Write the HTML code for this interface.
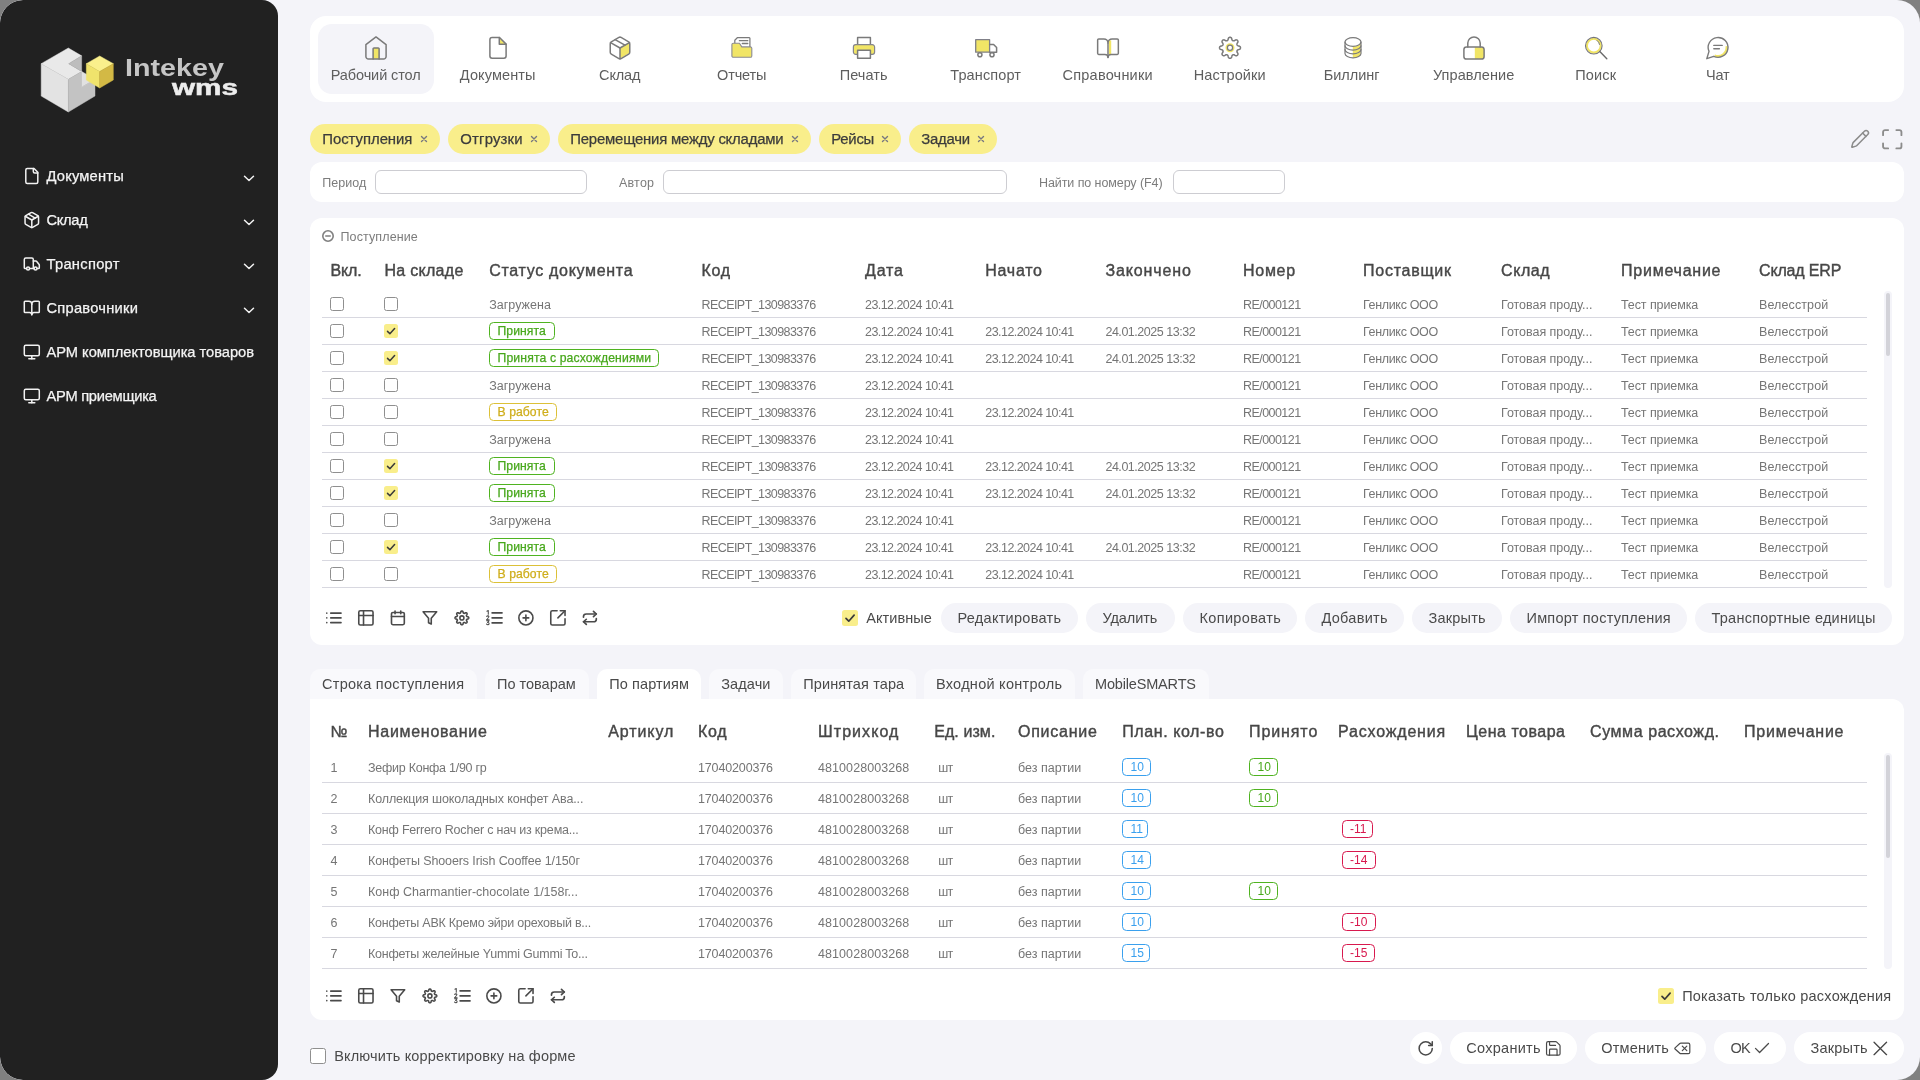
<!DOCTYPE html>
<html lang="ru"><head><meta charset="utf-8"><title>Intekey WMS</title>
<style>
html,body{margin:0;padding:0}
body{width:1920px;height:1080px;overflow:hidden;background:#808080;font-family:"Liberation Sans",sans-serif;position:relative}
.app{will-change:transform;position:absolute;left:0;top:0;width:1920px;height:1080px;background:#f4f4f9;border-radius:23px;overflow:hidden}
.side{position:absolute;left:0;top:0;width:278px;height:1080px;background:#212121;border-radius:23px 16px 16px 23px}
.t{position:absolute;white-space:nowrap;display:block}
.b{position:absolute;box-sizing:border-box}
.ic{position:absolute;display:block;overflow:visible}
.bd{border-radius:4.5px;background:#fff}
.m{-webkit-text-stroke:0.4px currentColor}
.m2{-webkit-text-stroke:0.25px currentColor}
.hl{position:absolute;height:1px;background:#d8d8e0}
</style></head><body><div class="app">

<div class="side">
<svg class="ic" style="left:36px;top:44px" width="84" height="72" viewBox="0 0 1260 1080">
<polygon points="78,295 485,60 685,178 490,295 685,412 485,530" fill="#e9e9e9" stroke="#e9e9e9" stroke-width="7" stroke-linejoin="round"/>
<polygon points="78,295 485,530 485,1020 78,780" fill="#e3e3e3" stroke="#e3e3e3" stroke-width="7" stroke-linejoin="round"/>
<polygon points="490,295 685,178 685,412" fill="#bdbdbd" stroke="#bdbdbd" stroke-width="7" stroke-linejoin="round"/>
<polygon points="485,530 685,412 685,645 885,530 885,780 485,1020" fill="#c3c3c3" stroke="#c3c3c3" stroke-width="7" stroke-linejoin="round"/>
<polygon points="685,412 885,530 685,645" fill="#e1e1e1" stroke="#e1e1e1" stroke-width="7" stroke-linejoin="round"/>
<polygon points="755,295 955,180 1160,295 955,412" fill="#faf08c" stroke="#faf08c" stroke-width="7" stroke-linejoin="round"/>
<polygon points="755,295 955,412 955,660 755,540" fill="#f0e36c" stroke="#f0e36c" stroke-width="7" stroke-linejoin="round"/>
<polygon points="955,412 1160,295 1160,540 955,660" fill="#d3b945" stroke="#d3b945" stroke-width="7" stroke-linejoin="round"/>
</svg>
<span class="t" id="lg1" style="left:125.3px;top:53.8px;font-size:24px;line-height:28px;font-weight:700;color:#c6c6c6;transform-origin:0 0;transform:scaleX(1.195)">Intekey</span>
<span class="t" id="lg2" style="left:171.5px;top:74.3px;font-size:22px;line-height:28px;font-weight:700;color:#ededed;-webkit-text-stroke:0.5px #ededed;transform-origin:0 0;transform:scaleX(1.35)">wms</span>
<svg class="ic" style="left:17px;top:162px" width="28" height="28" viewBox="0 0 28 28" fill="none" stroke="#f2f2f2" stroke-linecap="round" stroke-linejoin="round"><g transform="translate(14.80 14.00) scale(0.7500 0.7500) translate(-12 -12)" stroke-width="2.00"><path d="M15 2H6a2 2 0 0 0-2 2v16a2 2 0 0 0 2 2h12a2 2 0 0 0 2-2V7Z"/><path d="M14 2v4a2 2 0 0 0 2 2h4"/></g></svg>
<span class="t m2 sb" style="left:46.5px;top:167.00px;font-size:14.7px;line-height:19px;color:#f4f4f4;letter-spacing:0.185px;">Документы</span>
<svg class="ic" style="left:243px;top:173.5px" width="12" height="9" viewBox="0 0 12 9" fill="none" stroke="#f2f2f2" stroke-width="1.5" stroke-linecap="round" stroke-linejoin="round"><path d="M1.5 2.2 6 6.5 10.500 2.2"/></svg>
<svg class="ic" style="left:17px;top:206px" width="28" height="28" viewBox="0 0 28 28" fill="none" stroke="#f2f2f2" stroke-linecap="round" stroke-linejoin="round"><g transform="translate(14.80 14.00) scale(0.7500 0.7500) translate(-12 -12)" stroke-width="2.00"><path d="m7.5 4.27 9 5.15"/><path d="M21 8a2 2 0 0 0-1-1.73l-7-4a2 2 0 0 0-2 0l-7 4A2 2 0 0 0 3 8v8a2 2 0 0 0 1 1.73l7 4a2 2 0 0 0 2 0l7-4A2 2 0 0 0 21 16Z"/><path d="m3.3 7 8.7 5 8.7-5"/><path d="M12 22V12"/></g></svg>
<span class="t m2 sb" style="left:46.5px;top:211.00px;font-size:14.7px;line-height:19px;color:#f4f4f4;letter-spacing:-0.304px;">Склад</span>
<svg class="ic" style="left:243px;top:217.5px" width="12" height="9" viewBox="0 0 12 9" fill="none" stroke="#f2f2f2" stroke-width="1.5" stroke-linecap="round" stroke-linejoin="round"><path d="M1.5 2.2 6 6.5 10.500 2.2"/></svg>
<svg class="ic" style="left:17px;top:250px" width="28" height="28" viewBox="0 0 28 28" fill="none" stroke="#f2f2f2" stroke-linecap="round" stroke-linejoin="round"><g transform="translate(14.80 14.00) scale(0.7500 0.7500) translate(-12 -12)" stroke-width="2.00"><path d="M14 18V6a2 2 0 0 0-2-2H4a2 2 0 0 0-2 2v11a1 1 0 0 0 1 1h2"/><path d="M15 18H9"/><path d="M19 18h2a1 1 0 0 0 1-1v-3.65a1 1 0 0 0-.22-.624l-3.48-4.35A1 1 0 0 0 17.52 8H14"/><circle cx="17" cy="18" r="2"/><circle cx="7" cy="18" r="2"/></g></svg>
<span class="t m2 sb" style="left:46.5px;top:255.00px;font-size:14.7px;line-height:19px;color:#f4f4f4;letter-spacing:0.295px;">Транспорт</span>
<svg class="ic" style="left:243px;top:261.5px" width="12" height="9" viewBox="0 0 12 9" fill="none" stroke="#f2f2f2" stroke-width="1.5" stroke-linecap="round" stroke-linejoin="round"><path d="M1.5 2.2 6 6.5 10.500 2.2"/></svg>
<svg class="ic" style="left:17px;top:294px" width="28" height="28" viewBox="0 0 28 28" fill="none" stroke="#f2f2f2" stroke-linecap="round" stroke-linejoin="round"><g transform="translate(14.80 14.00) scale(0.7500 0.7500) translate(-12 -12)" stroke-width="2.00"><path d="M12 7v14"/><path d="M3 18a1 1 0 0 1-1-1V4a1 1 0 0 1 1-1h5a4 4 0 0 1 4 4 4 4 0 0 1 4-4h5a1 1 0 0 1 1 1v13a1 1 0 0 1-1 1h-6a3 3 0 0 0-3 3 3 3 0 0 0-3-3z"/></g></svg>
<span class="t m2 sb" style="left:46.5px;top:299.00px;font-size:14.7px;line-height:19px;color:#f4f4f4;letter-spacing:0.242px;">Справочники</span>
<svg class="ic" style="left:243px;top:305.5px" width="12" height="9" viewBox="0 0 12 9" fill="none" stroke="#f2f2f2" stroke-width="1.5" stroke-linecap="round" stroke-linejoin="round"><path d="M1.5 2.2 6 6.5 10.500 2.2"/></svg>
<svg class="ic" style="left:17px;top:338px" width="28" height="28" viewBox="0 0 28 28" fill="none" stroke="#f2f2f2" stroke-linecap="round" stroke-linejoin="round"><g transform="translate(14.80 14.00) scale(0.7500 0.7500) translate(-12 -12)" stroke-width="2.00"><rect width="20" height="14" x="2" y="3" rx="2"/><path d="M8 21h8"/><path d="M12 17v4"/></g></svg>
<span class="t m2 sb" style="left:46.5px;top:343.00px;font-size:14.7px;line-height:19px;color:#f4f4f4;letter-spacing:-0.036px;">АРМ комплектовщика товаров</span>
<svg class="ic" style="left:17px;top:382px" width="28" height="28" viewBox="0 0 28 28" fill="none" stroke="#f2f2f2" stroke-linecap="round" stroke-linejoin="round"><g transform="translate(14.80 14.00) scale(0.7500 0.7500) translate(-12 -12)" stroke-width="2.00"><rect width="20" height="14" x="2" y="3" rx="2"/><path d="M8 21h8"/><path d="M12 17v4"/></g></svg>
<span class="t m2 sb" style="left:46.5px;top:387.00px;font-size:14.7px;line-height:19px;color:#f4f4f4;letter-spacing:-0.271px;">АРМ приемщика</span>
</div>
<div class="b" style="left:310px;top:16px;width:1594px;height:86px;background:#fff;border-radius:16px;"></div>
<div class="b" style="left:318px;top:24px;width:116px;height:70px;background:#f4f4f9;border-radius:14px;"></div>
<span class="t nv" style="left:225.7px;width:300px;text-align:center;top:66.00px;font-size:14.5px;line-height:19px;color:#5e5e5e;letter-spacing:-0.094px;">Рабочий стол</span>
<span class="t nv" style="left:347.7px;width:300px;text-align:center;top:66.00px;font-size:14.5px;line-height:19px;color:#5e5e5e;letter-spacing:0.106px;">Документы</span>
<span class="t nv" style="left:469.70000000000005px;width:300px;text-align:center;top:66.00px;font-size:14.5px;line-height:19px;color:#5e5e5e;letter-spacing:-0.142px;">Склад</span>
<span class="t nv" style="left:591.7px;width:300px;text-align:center;top:66.00px;font-size:14.5px;line-height:19px;color:#5e5e5e;letter-spacing:-0.145px;">Отчеты</span>
<span class="t nv" style="left:713.7px;width:300px;text-align:center;top:66.00px;font-size:14.5px;line-height:19px;color:#5e5e5e;letter-spacing:0.077px;">Печать</span>
<span class="t nv" style="left:835.7px;width:300px;text-align:center;top:66.00px;font-size:14.5px;line-height:19px;color:#5e5e5e;letter-spacing:0.133px;">Транспорт</span>
<span class="t nv" style="left:957.7px;width:300px;text-align:center;top:66.00px;font-size:14.5px;line-height:19px;color:#5e5e5e;letter-spacing:0.216px;">Справочники</span>
<span class="t nv" style="left:1079.7px;width:300px;text-align:center;top:66.00px;font-size:14.5px;line-height:19px;color:#5e5e5e;letter-spacing:0.099px;">Настройки</span>
<span class="t nv" style="left:1201.7px;width:300px;text-align:center;top:66.00px;font-size:14.5px;line-height:19px;color:#5e5e5e;letter-spacing:-0.023px;">Биллинг</span>
<span class="t nv" style="left:1323.7px;width:300px;text-align:center;top:66.00px;font-size:14.5px;line-height:19px;color:#5e5e5e;letter-spacing:0.077px;">Управление</span>
<span class="t nv" style="left:1445.7px;width:300px;text-align:center;top:66.00px;font-size:14.5px;line-height:19px;color:#5e5e5e;letter-spacing:0.178px;">Поиск</span>
<span class="t nv" style="left:1567.7px;width:300px;text-align:center;top:66.00px;font-size:14.5px;line-height:19px;color:#5e5e5e;letter-spacing:-0.231px;">Чат</span>
<svg class="ic" style="left:360.0px;top:32.0px" width="32" height="32" viewBox="-16.0 -16.0 32 32" fill="none" stroke="#7a7a7a" stroke-width="1.5" stroke-linecap="round" stroke-linejoin="round"><rect x="-2.9" y="-0.1" width="6" height="11" fill="#f1e566" stroke="none"/><path d="M-2.9 10.9V0.800a.9.9 0 0 1 .9-.9h4.200a.9.9 0 0 1 .9.9v10.100"/><path d="M-10.1 -3.4 0 -11.1 10.1 -3.4V8.4a2.5 2.5 0 0 1-2.5 2.5H-7.6a2.5 2.5 0 0 1-2.5-2.5z"/></svg>
<svg class="ic" style="left:482.0px;top:32.0px" width="32" height="32" viewBox="-16.0 -16.0 32 32" fill="none" stroke="#7a7a7a" stroke-width="1.5" stroke-linecap="round" stroke-linejoin="round"><path d="M1.6 -9.8 7.4 -4 1.6 -4z" fill="#f1e566" stroke="none"/><path d="M1.5 -10.5H-5.9a2.2 2.2 0 0 0-2.2 2.2V8.1a2.2 2.2 0 0 0 2.2 2.2H5.9a2.2 2.2 0 0 0 2.2-2.2V-3.9z"/><path d="M1.3 -10.5v6.8h6.8"/></svg>
<svg class="ic" style="left:604.0px;top:32.0px" width="32" height="32" viewBox="-16.0 -16.0 32 32" fill="none" stroke="#7a7a7a" stroke-width="1.5" stroke-linecap="round" stroke-linejoin="round"><g transform="scale(1.085) translate(-12 -12)" stroke-width="1.38"><path d="M12 12 20.6 7.1 20.6 16.6 12 21.6z" fill="#f1e566" stroke="none"/><path d="m7.5 4.27 9 5.15"/><path d="M21 8a2 2 0 0 0-1-1.73l-7-4a2 2 0 0 0-2 0l-7 4A2 2 0 0 0 3 8v8a2 2 0 0 0 1 1.73l7 4a2 2 0 0 0 2 0l7-4A2 2 0 0 0 21 16Z"/><path d="m3.3 7 8.7 5 8.7-5"/><path d="M12 22V12"/></g></svg>
<svg class="ic" style="left:726.0px;top:32.0px" width="32" height="32" viewBox="-16.0 -16.0 32 32" fill="none" stroke="#7a7a7a" stroke-width="1.5" stroke-linecap="round" stroke-linejoin="round"><path d="M-7.2 -5V-7.800l2.500-2.500H7.300a.6.6 0 0 1 .6.6V0" stroke-width="1.25"/><path d="M-2.6 -7.3H5.8M0.3 -4.5H5.8" stroke-width="1.3"/><path d="M-10.1 -3.4a1.4 1.4 0 0 1 1.4-1.4h6.2l2.3 3.7h8.6a1.4 1.4 0 0 1 1.4 1.4v7.6a1.4 1.4 0 0 1-1.4 1.4H-8.7a1.4 1.4 0 0 1-1.4-1.4z" fill="#f1e566" stroke="#8b8b93" stroke-width="1.1"/></svg>
<svg class="ic" style="left:848.0px;top:32.0px" width="32" height="32" viewBox="-16.0 -16.0 32 32" fill="none" stroke="#7a7a7a" stroke-width="1.5" stroke-linecap="round" stroke-linejoin="round"><path d="M-6.4 -3.3v-7.3H6.4v7.3"/><path d="M-8.3 -3.3H8.3a2.3 2.3 0 0 1 2.3 2.3v5a2.3 2.3 0 0 1-2.3 2.3H-8.3a2.300 2.300 0 0 1-2.300-2.300v-5a2.300 2.300 0 0 1 2.300-2.300z" fill="#f1e566" stroke="#85858c" stroke-width="1.2"/><rect x="-6.4" y="2.2" width="12.8" height="8.100" fill="#fff"/></svg>
<svg class="ic" style="left:970.0px;top:32.0px" width="32" height="32" viewBox="-16.0 -16.0 32 32" fill="none" stroke="#7a7a7a" stroke-width="1.5" stroke-linecap="round" stroke-linejoin="round"><rect x="-10.3" y="-8.3" width="13.9" height="12.5" fill="#f1e566" stroke="#808088" stroke-width="1.3"/><path d="M3.6 -3.6H7.6l3 3.200V4.2H3.600"/><circle cx="-6.100" cy="6.800" r="2.050" fill="#fff"/><circle cx="6" cy="6.800" r="2.050" fill="#fff"/></svg>
<svg class="ic" style="left:1092.0px;top:32.0px" width="32" height="32" viewBox="-16.0 -16.0 32 32" fill="none" stroke="#7a7a7a" stroke-width="1.5" stroke-linecap="round" stroke-linejoin="round"><rect x="0.9" y="-7.6" width="2.3" height="14.4" fill="#f1e566" stroke="none"/><g transform="translate(0 0.2) scale(1.035 1.03) translate(-12 -12)" stroke-width="1.45"><path d="M12 7v14"/><path d="M3 18a1 1 0 0 1-1-1V4a1 1 0 0 1 1-1h5a4 4 0 0 1 4 4 4 4 0 0 1 4-4h5a1 1 0 0 1 1 1v13a1 1 0 0 1-1 1h-6a3 3 0 0 0-3 3 3 3 0 0 0-3-3z"/></g></svg>
<svg class="ic" style="left:1214.0px;top:32.0px" width="32" height="32" viewBox="-16.0 -16.0 32 32" fill="none" stroke="#7a7a7a" stroke-width="1.5" stroke-linecap="round" stroke-linejoin="round"><circle cx="0" cy="-0.2" r="3.7" stroke="#f1e566" stroke-width="1.6"/><g transform="translate(0 -0.2) scale(1.03) translate(-12 -12)" stroke-width="1.45"><path d="M12.00 1.80 L12.33 1.83 L12.66 1.93 L12.98 2.09 L13.27 2.33 L13.54 2.66 L13.72 3.37 L13.85 4.08 L14.03 4.42 L14.22 4.69 L14.41 4.89 L14.62 5.05 L14.83 5.16 L15.06 5.24 L15.32 5.27 L15.60 5.26 L15.92 5.21 L16.30 5.09 L16.89 4.68 L17.51 4.31 L17.94 4.26 L18.32 4.30 L18.66 4.41 L18.95 4.57 L19.21 4.79 L19.43 5.05 L19.59 5.34 L19.70 5.68 L19.74 6.06 L19.69 6.49 L19.32 7.11 L18.91 7.70 L18.79 8.08 L18.74 8.40 L18.73 8.68 L18.76 8.94 L18.84 9.17 L18.95 9.38 L19.11 9.59 L19.31 9.78 L19.58 9.97 L19.92 10.15 L20.63 10.28 L21.34 10.46 L21.67 10.73 L21.91 11.02 L22.07 11.34 L22.17 11.67 L22.20 12.00 L22.17 12.33 L22.07 12.66 L21.91 12.98 L21.67 13.27 L21.34 13.54 L20.63 13.72 L19.92 13.85 L19.58 14.03 L19.31 14.22 L19.11 14.41 L18.95 14.62 L18.84 14.83 L18.76 15.06 L18.73 15.32 L18.74 15.60 L18.79 15.92 L18.91 16.30 L19.32 16.89 L19.69 17.51 L19.74 17.94 L19.70 18.32 L19.59 18.66 L19.43 18.95 L19.21 19.21 L18.95 19.43 L18.66 19.59 L18.32 19.70 L17.94 19.74 L17.51 19.69 L16.89 19.32 L16.30 18.91 L15.92 18.79 L15.60 18.74 L15.32 18.73 L15.06 18.76 L14.83 18.84 L14.62 18.95 L14.41 19.11 L14.22 19.31 L14.03 19.58 L13.85 19.92 L13.72 20.63 L13.54 21.34 L13.27 21.67 L12.98 21.91 L12.66 22.07 L12.33 22.17 L12.00 22.20 L11.67 22.17 L11.34 22.07 L11.02 21.91 L10.73 21.67 L10.46 21.34 L10.28 20.63 L10.15 19.92 L9.97 19.58 L9.78 19.31 L9.59 19.11 L9.38 18.95 L9.17 18.84 L8.94 18.76 L8.68 18.73 L8.40 18.74 L8.08 18.79 L7.70 18.91 L7.11 19.32 L6.49 19.69 L6.06 19.74 L5.68 19.70 L5.34 19.59 L5.05 19.43 L4.79 19.21 L4.57 18.95 L4.41 18.66 L4.30 18.32 L4.26 17.94 L4.31 17.51 L4.68 16.89 L5.09 16.30 L5.21 15.92 L5.26 15.60 L5.27 15.32 L5.24 15.06 L5.16 14.83 L5.05 14.62 L4.89 14.41 L4.69 14.22 L4.42 14.03 L4.08 13.85 L3.37 13.72 L2.66 13.54 L2.33 13.27 L2.09 12.98 L1.93 12.66 L1.83 12.33 L1.80 12.00 L1.83 11.67 L1.93 11.34 L2.09 11.02 L2.33 10.73 L2.66 10.46 L3.37 10.28 L4.08 10.15 L4.42 9.97 L4.69 9.78 L4.89 9.59 L5.05 9.38 L5.16 9.17 L5.24 8.94 L5.27 8.68 L5.26 8.40 L5.21 8.08 L5.09 7.70 L4.68 7.11 L4.31 6.49 L4.26 6.06 L4.30 5.68 L4.41 5.34 L4.57 5.05 L4.79 4.79 L5.05 4.57 L5.34 4.41 L5.68 4.30 L6.06 4.26 L6.49 4.31 L7.11 4.68 L7.70 5.09 L8.08 5.21 L8.40 5.26 L8.68 5.27 L8.94 5.24 L9.17 5.16 L9.38 5.05 L9.59 4.89 L9.78 4.69 L9.97 4.42 L10.15 4.08 L10.28 3.37 L10.46 2.66 L10.73 2.33 L11.02 2.09 L11.34 1.93 L11.67 1.83 L12.00 1.80Z"/><circle cx="12" cy="12" r="2.5" stroke-width="1.2"/></g></svg>
<svg class="ic" style="left:1336.5px;top:32.0px" width="32" height="32" viewBox="-16.0 -16.0 32 32" fill="none" stroke="#7a7a7a" stroke-width="1.5" stroke-linecap="round" stroke-linejoin="round"><path d="M-0.2 -1.5000000000000002 A8 4.3 0 0 0 7.6 -4.8 V-1.0999999999999996 A8 4.300 0 0 1 -0.2 2.0999999999999996z" fill="#f1e566" stroke="none"/><path d="M-0.2 2.25 A8 4.3 0 0 0 7.6 -1.05 V2.6500000000000004 A8 4.300 0 0 1 -0.2 5.85z" fill="#f1e566" stroke="none"/><path d="M-0.2 6.0 A8 4.3 0 0 0 7.6 2.7 V6.4 A8 4.300 0 0 1 -0.2 9.6z" fill="#f1e566" stroke="none"/><ellipse cx="0" cy="-6" rx="8" ry="4.3" stroke-width="1.2"/><path d="M-8 -6V5.5a8 4.300 0 0 0 16 0V-6" stroke-width="1.2"/><path d="M-8 -2.25a8 4.300 0 0 0 16 0" stroke-width="1.2"/><path d="M-8 1.5a8 4.300 0 0 0 16 0" stroke-width="1.2"/></svg>
<svg class="ic" style="left:1458.0px;top:32.0px" width="32" height="32" viewBox="-16.0 -16.0 32 32" fill="none" stroke="#7a7a7a" stroke-width="1.5" stroke-linecap="round" stroke-linejoin="round"><path d="M0.800 -1.100H8a2 2 0 0 1 2 2V9a2 2 0 0 1-2 2H0.800z" fill="#f1e566" stroke="none"/><rect x="-10.1" y="-1.1" width="20.2" height="12.100" rx="2.600"/><path d="M-6.200 -1.100V-4.900a6.200 6.200 0 0 1 12.400 0V-1.100"/></svg>
<svg class="ic" style="left:1578.0px;top:32.0px" width="32" height="32" viewBox="-16.0 -16.0 32 32" fill="none" stroke="#7a7a7a" stroke-width="1.5" stroke-linecap="round" stroke-linejoin="round"><circle cx="-0.2" cy="-2.300" r="6.900" stroke="#f1e566" stroke-width="2.100"/><circle cx="-0.2" cy="-2.300" r="8.300" stroke="#74747c" stroke-width="1.1" stroke-linecap="butt"/><path d="M3 -7.600a5.700 5.700 0 0 1 2.500 4" stroke="#777" stroke-width="1"/><path d="M5.800 3.600 12.800 10.700" stroke="#6a6a6a" stroke-width="1.400"/></svg>
<svg class="ic" style="left:1702.1px;top:32.0px" width="32" height="32" viewBox="-16.0 -16.0 32 32" fill="none" stroke="#7a7a7a" stroke-width="1.5" stroke-linecap="round" stroke-linejoin="round"><path d="M8.600 -1.800A8.800 8.800 0 0 1 -3.400 7.500" stroke="#f1e566" stroke-width="2.200" stroke-linecap="butt"/><path d="M-9 3.400A9.900 9.900 0 1 1 -4.300 8.300L-11.200 10.700z" stroke-width="1.400"/><path d="M-4.200 -2.600H4.200M-4.200 0.700H1.400" stroke-width="1.400"/></svg>
<div class="b" style="left:310px;top:124px;width:130px;height:30px;background:#f9ee8b;border-radius:15px;"></div>
<span class="t m2 tg" style="left:322.3px;top:130.00px;font-size:14.9px;line-height:19px;color:#3c3c3c;letter-spacing:-0.040px;">Поступления</span>
<svg class="ic" style="left:420px;top:135.3px" width="8" height="8" viewBox="0 0 8 8" stroke="#77777f" stroke-width="1.4" stroke-linecap="round"><path d="M1.5 1.5 6.500 6.500M6.500 1.500 1.500 6.500"/></svg>
<div class="b" style="left:448px;top:124px;width:102px;height:30px;background:#f9ee8b;border-radius:15px;"></div>
<span class="t m2 tg" style="left:460.3px;top:130.00px;font-size:14.9px;line-height:19px;color:#3c3c3c;letter-spacing:0.177px;">Отгрузки</span>
<svg class="ic" style="left:530px;top:135.3px" width="8" height="8" viewBox="0 0 8 8" stroke="#77777f" stroke-width="1.4" stroke-linecap="round"><path d="M1.5 1.5 6.500 6.500M6.500 1.500 1.500 6.500"/></svg>
<div class="b" style="left:558px;top:124px;width:253px;height:30px;background:#f9ee8b;border-radius:15px;"></div>
<span class="t m2 tg" style="left:570.3px;top:130.00px;font-size:14.9px;line-height:19px;color:#3c3c3c;letter-spacing:-0.204px;">Перемещения между складами</span>
<svg class="ic" style="left:791px;top:135.3px" width="8" height="8" viewBox="0 0 8 8" stroke="#77777f" stroke-width="1.4" stroke-linecap="round"><path d="M1.5 1.5 6.500 6.500M6.500 1.500 1.500 6.500"/></svg>
<div class="b" style="left:819px;top:124px;width:82px;height:30px;background:#f9ee8b;border-radius:15px;"></div>
<span class="t m2 tg" style="left:831.3px;top:130.00px;font-size:14.9px;line-height:19px;color:#3c3c3c;letter-spacing:-0.258px;">Рейсы</span>
<svg class="ic" style="left:881px;top:135.3px" width="8" height="8" viewBox="0 0 8 8" stroke="#77777f" stroke-width="1.4" stroke-linecap="round"><path d="M1.5 1.5 6.500 6.500M6.500 1.500 1.500 6.500"/></svg>
<div class="b" style="left:909px;top:124px;width:88px;height:30px;background:#f9ee8b;border-radius:15px;"></div>
<span class="t m2 tg" style="left:921.3px;top:130.00px;font-size:14.9px;line-height:19px;color:#3c3c3c;letter-spacing:-0.250px;">Задачи</span>
<svg class="ic" style="left:977px;top:135.3px" width="8" height="8" viewBox="0 0 8 8" stroke="#77777f" stroke-width="1.4" stroke-linecap="round"><path d="M1.5 1.5 6.500 6.500M6.500 1.500 1.500 6.500"/></svg>
<svg class="ic" style="left:1846px;top:124px" width="28" height="28" viewBox="0 0 28 28" fill="none" stroke="#8c8c8c" stroke-linecap="round" stroke-linejoin="round"><g transform="translate(14.10 14.90) scale(0.8333 0.8333) translate(-12 -12)" stroke-width="1.80"><path d="M21.174 6.812a1 1 0 0 0-3.986-3.987L3.842 16.174a2 2 0 0 0-.5.83l-1.321 4.352a.5.5 0 0 0 .623.622l4.353-1.32a2 2 0 0 0 .83-.497z"/><path d="m15 5 4 4"/></g></svg>
<svg class="ic" style="left:1879.75px;top:126.75px" width="24.5" height="24.5" viewBox="0 0 24 24" fill="none" stroke="#8c8c8c" stroke-width="1.8" stroke-linecap="round" stroke-linejoin="round"><path d="M3 8V5a2 2 0 0 1 2-2h3"/><path d="M16 3h3a2 2 0 0 1 2 2v3"/><path d="M21 16v3a2 2 0 0 1-2 2h-3"/><path d="M8 21H5a2 2 0 0 1-2-2v-3"/></svg>
<div class="b" style="left:310px;top:162px;width:1594px;height:40px;background:#fff;border-radius:12px;"></div>
<span class="t fl" style="left:322.3px;top:175.00px;font-size:12.5px;line-height:16px;color:#7c7c7c;letter-spacing:0.031px;">Период</span>
<div class="b" style="left:375px;top:170px;width:212px;height:24px;background:#fff;border-radius:6px;border:1px solid #cdcdd2"></div>
<span class="t fl" style="left:619px;top:175.00px;font-size:12.5px;line-height:16px;color:#7c7c7c;letter-spacing:0.199px;">Автор</span>
<div class="b" style="left:663px;top:170px;width:344px;height:24px;background:#fff;border-radius:6px;border:1px solid #cdcdd2"></div>
<span class="t fl" style="left:1039px;top:175.00px;font-size:12.5px;line-height:16px;color:#7c7c7c;letter-spacing:-0.084px;">Найти по номеру (F4)</span>
<div class="b" style="left:1173px;top:170px;width:112px;height:24px;background:#fff;border-radius:6px;border:1px solid #cdcdd2"></div>
<div class="b" style="left:310px;top:218px;width:1594px;height:427px;background:#fff;border-radius:12px;"></div>
<svg class="ic" style="left:321px;top:229px" width="14" height="14" viewBox="-7 -7 14 14" fill="none" stroke="#808080" stroke-width="1.6" stroke-linecap="round"><circle r="5.2"/><path d="M-2.200 0H2.200"/></svg>
<span class="t ph" style="left:340.5px;top:229.00px;font-size:12.5px;line-height:16px;color:#7c7c7c;letter-spacing:0.114px;">Поступление</span>
<span class="t m th" style="left:330.5px;top:260.00px;font-size:16px;line-height:21px;color:#474747;letter-spacing:-0.180px;">Вкл.</span>
<span class="t m th" style="left:384.5px;top:260.00px;font-size:16px;line-height:21px;color:#474747;letter-spacing:0.282px;">На складе</span>
<span class="t m th" style="left:489.2px;top:260.00px;font-size:16px;line-height:21px;color:#474747;letter-spacing:0.690px;">Статус документа</span>
<span class="t m th" style="left:701.5px;top:260.00px;font-size:16px;line-height:21px;color:#474747;letter-spacing:0.648px;">Код</span>
<span class="t m th" style="left:865px;top:260.00px;font-size:16px;line-height:21px;color:#474747;letter-spacing:0.821px;">Дата</span>
<span class="t m th" style="left:985.3px;top:260.00px;font-size:16px;line-height:21px;color:#474747;letter-spacing:0.714px;">Начато</span>
<span class="t m th" style="left:1105.4px;top:260.00px;font-size:16px;line-height:21px;color:#474747;letter-spacing:0.881px;">Закончено</span>
<span class="t m th" style="left:1243px;top:260.00px;font-size:16px;line-height:21px;color:#474747;letter-spacing:0.713px;">Номер</span>
<span class="t m th" style="left:1363px;top:260.00px;font-size:16px;line-height:21px;color:#474747;letter-spacing:0.744px;">Поставщик</span>
<span class="t m th1" style="left:1501px;top:260.00px;font-size:16px;line-height:21px;color:#474747;letter-spacing:0.597px;">Склад</span>
<span class="t m th" style="left:1621px;top:260.00px;font-size:16px;line-height:21px;color:#474747;letter-spacing:0.766px;">Примечание</span>
<span class="t m th" style="left:1759px;top:260.00px;font-size:16px;line-height:21px;color:#474747;letter-spacing:-0.157px;">Склад ERP</span>
<div class="hl" style="left:322px;top:317px;width:1545px"></div>
<div class="b" style="left:330px;top:297px;width:14px;height:14px;border:1px solid #8f8f8f;background:#fff;border-radius:2.5px"></div>
<div class="b" style="left:384px;top:297px;width:14px;height:14px;border:1px solid #8f8f8f;background:#fff;border-radius:2.5px"></div>
<span class="t td" style="left:489.2px;top:297.00px;font-size:12.5px;line-height:16px;color:#757575;letter-spacing:0.033px;">Загружена</span>
<span class="t td" style="left:701.5px;top:297.00px;font-size:12.5px;line-height:16px;color:#757575;letter-spacing:-0.569px;">RECEIPT_130983376</span>
<span class="t td" style="left:865px;top:297.00px;font-size:12.5px;line-height:16px;color:#757575;letter-spacing:-0.555px;">23.12.2024 10:41</span>
<span class="t td" style="left:1243px;top:297.00px;font-size:12.5px;line-height:16px;color:#757575;letter-spacing:-0.558px;">RE/000121</span>
<span class="t td" style="left:1363px;top:297.00px;font-size:12.5px;line-height:16px;color:#757575;letter-spacing:-0.338px;">Генликс ООО</span>
<span class="t td" style="left:1501px;top:297.00px;font-size:12.5px;line-height:16px;color:#757575;letter-spacing:-0.037px;">Готовая проду...</span>
<span class="t td" style="left:1621px;top:297.00px;font-size:12.5px;line-height:16px;color:#757575;letter-spacing:-0.089px;">Тест приемка</span>
<span class="t td" style="left:1759px;top:297.00px;font-size:12.5px;line-height:16px;color:#757575;letter-spacing:0.107px;">Велесстрой</span>
<div class="hl" style="left:322px;top:344px;width:1545px"></div>
<div class="b" style="left:330px;top:324px;width:14px;height:14px;border:1px solid #8f8f8f;background:#fff;border-radius:2.5px"></div>
<div class="b" style="left:384px;top:324px;width:14px;height:14px;background:#f9ee8b;border-radius:2.5px"></div>
<svg class="ic" style="left:384px;top:324px" width="14" height="14" viewBox="0 0 14 14" fill="none" stroke="#3a3a3a" stroke-width="1.5" stroke-linecap="round" stroke-linejoin="round"><path d="M3.5 7.4 5.9 9.8 10.6 4.5"/></svg>
<div class="b bd" style="left:489px;top:322.0px;width:66px;height:18px;border:1px solid #4fb320"></div>
<span class="t bdg m2" style="left:497.5px;top:323.00px;font-size:12.2px;line-height:16px;color:#48a81c;letter-spacing:0.066px;">Принята</span>
<span class="t td" style="left:701.5px;top:324.00px;font-size:12.5px;line-height:16px;color:#757575;letter-spacing:-0.569px;">RECEIPT_130983376</span>
<span class="t td" style="left:865px;top:324.00px;font-size:12.5px;line-height:16px;color:#757575;letter-spacing:-0.555px;">23.12.2024 10:41</span>
<span class="t td" style="left:985.3px;top:324.00px;font-size:12.5px;line-height:16px;color:#757575;letter-spacing:-0.555px;">23.12.2024 10:41</span>
<span class="t td" style="left:1105.4px;top:324.00px;font-size:12.5px;line-height:16px;color:#757575;letter-spacing:-0.462px;">24.01.2025 13:32</span>
<span class="t td" style="left:1243px;top:324.00px;font-size:12.5px;line-height:16px;color:#757575;letter-spacing:-0.558px;">RE/000121</span>
<span class="t td" style="left:1363px;top:324.00px;font-size:12.5px;line-height:16px;color:#757575;letter-spacing:-0.338px;">Генликс ООО</span>
<span class="t td" style="left:1501px;top:324.00px;font-size:12.5px;line-height:16px;color:#757575;letter-spacing:-0.037px;">Готовая проду...</span>
<span class="t td" style="left:1621px;top:324.00px;font-size:12.5px;line-height:16px;color:#757575;letter-spacing:-0.089px;">Тест приемка</span>
<span class="t td" style="left:1759px;top:324.00px;font-size:12.5px;line-height:16px;color:#757575;letter-spacing:0.107px;">Велесстрой</span>
<div class="hl" style="left:322px;top:371px;width:1545px"></div>
<div class="b" style="left:330px;top:351px;width:14px;height:14px;border:1px solid #8f8f8f;background:#fff;border-radius:2.5px"></div>
<div class="b" style="left:384px;top:351px;width:14px;height:14px;background:#f9ee8b;border-radius:2.5px"></div>
<svg class="ic" style="left:384px;top:351px" width="14" height="14" viewBox="0 0 14 14" fill="none" stroke="#3a3a3a" stroke-width="1.5" stroke-linecap="round" stroke-linejoin="round"><path d="M3.5 7.4 5.9 9.8 10.6 4.5"/></svg>
<div class="b bd" style="left:489px;top:349.0px;width:170px;height:18px;border:1px solid #4fb320"></div>
<span class="t bdg m2" style="left:497.5px;top:350.00px;font-size:12.2px;line-height:16px;color:#48a81c;letter-spacing:0.141px;">Принята с расхождениями</span>
<span class="t td" style="left:701.5px;top:351.00px;font-size:12.5px;line-height:16px;color:#757575;letter-spacing:-0.569px;">RECEIPT_130983376</span>
<span class="t td" style="left:865px;top:351.00px;font-size:12.5px;line-height:16px;color:#757575;letter-spacing:-0.555px;">23.12.2024 10:41</span>
<span class="t td" style="left:985.3px;top:351.00px;font-size:12.5px;line-height:16px;color:#757575;letter-spacing:-0.555px;">23.12.2024 10:41</span>
<span class="t td" style="left:1105.4px;top:351.00px;font-size:12.5px;line-height:16px;color:#757575;letter-spacing:-0.462px;">24.01.2025 13:32</span>
<span class="t td" style="left:1243px;top:351.00px;font-size:12.5px;line-height:16px;color:#757575;letter-spacing:-0.558px;">RE/000121</span>
<span class="t td" style="left:1363px;top:351.00px;font-size:12.5px;line-height:16px;color:#757575;letter-spacing:-0.338px;">Генликс ООО</span>
<span class="t td" style="left:1501px;top:351.00px;font-size:12.5px;line-height:16px;color:#757575;letter-spacing:-0.037px;">Готовая проду...</span>
<span class="t td" style="left:1621px;top:351.00px;font-size:12.5px;line-height:16px;color:#757575;letter-spacing:-0.089px;">Тест приемка</span>
<span class="t td" style="left:1759px;top:351.00px;font-size:12.5px;line-height:16px;color:#757575;letter-spacing:0.107px;">Велесстрой</span>
<div class="hl" style="left:322px;top:398px;width:1545px"></div>
<div class="b" style="left:330px;top:378px;width:14px;height:14px;border:1px solid #8f8f8f;background:#fff;border-radius:2.5px"></div>
<div class="b" style="left:384px;top:378px;width:14px;height:14px;border:1px solid #8f8f8f;background:#fff;border-radius:2.5px"></div>
<span class="t td" style="left:489.2px;top:378.00px;font-size:12.5px;line-height:16px;color:#757575;letter-spacing:0.033px;">Загружена</span>
<span class="t td" style="left:701.5px;top:378.00px;font-size:12.5px;line-height:16px;color:#757575;letter-spacing:-0.569px;">RECEIPT_130983376</span>
<span class="t td" style="left:865px;top:378.00px;font-size:12.5px;line-height:16px;color:#757575;letter-spacing:-0.555px;">23.12.2024 10:41</span>
<span class="t td" style="left:1243px;top:378.00px;font-size:12.5px;line-height:16px;color:#757575;letter-spacing:-0.558px;">RE/000121</span>
<span class="t td" style="left:1363px;top:378.00px;font-size:12.5px;line-height:16px;color:#757575;letter-spacing:-0.338px;">Генликс ООО</span>
<span class="t td" style="left:1501px;top:378.00px;font-size:12.5px;line-height:16px;color:#757575;letter-spacing:-0.037px;">Готовая проду...</span>
<span class="t td" style="left:1621px;top:378.00px;font-size:12.5px;line-height:16px;color:#757575;letter-spacing:-0.089px;">Тест приемка</span>
<span class="t td" style="left:1759px;top:378.00px;font-size:12.5px;line-height:16px;color:#757575;letter-spacing:0.107px;">Велесстрой</span>
<div class="hl" style="left:322px;top:425px;width:1545px"></div>
<div class="b" style="left:330px;top:405px;width:14px;height:14px;border:1px solid #8f8f8f;background:#fff;border-radius:2.5px"></div>
<div class="b" style="left:384px;top:405px;width:14px;height:14px;border:1px solid #8f8f8f;background:#fff;border-radius:2.5px"></div>
<div class="b bd" style="left:489px;top:403.0px;width:68px;height:18px;border:1px solid #dcc138"></div>
<span class="t bdg m2" style="left:497.5px;top:404.00px;font-size:12.2px;line-height:16px;color:#cfae1c;letter-spacing:0.058px;">В работе</span>
<span class="t td" style="left:701.5px;top:405.00px;font-size:12.5px;line-height:16px;color:#757575;letter-spacing:-0.569px;">RECEIPT_130983376</span>
<span class="t td" style="left:865px;top:405.00px;font-size:12.5px;line-height:16px;color:#757575;letter-spacing:-0.555px;">23.12.2024 10:41</span>
<span class="t td" style="left:985.3px;top:405.00px;font-size:12.5px;line-height:16px;color:#757575;letter-spacing:-0.555px;">23.12.2024 10:41</span>
<span class="t td" style="left:1243px;top:405.00px;font-size:12.5px;line-height:16px;color:#757575;letter-spacing:-0.558px;">RE/000121</span>
<span class="t td" style="left:1363px;top:405.00px;font-size:12.5px;line-height:16px;color:#757575;letter-spacing:-0.338px;">Генликс ООО</span>
<span class="t td" style="left:1501px;top:405.00px;font-size:12.5px;line-height:16px;color:#757575;letter-spacing:-0.037px;">Готовая проду...</span>
<span class="t td" style="left:1621px;top:405.00px;font-size:12.5px;line-height:16px;color:#757575;letter-spacing:-0.089px;">Тест приемка</span>
<span class="t td" style="left:1759px;top:405.00px;font-size:12.5px;line-height:16px;color:#757575;letter-spacing:0.107px;">Велесстрой</span>
<div class="hl" style="left:322px;top:452px;width:1545px"></div>
<div class="b" style="left:330px;top:432px;width:14px;height:14px;border:1px solid #8f8f8f;background:#fff;border-radius:2.5px"></div>
<div class="b" style="left:384px;top:432px;width:14px;height:14px;border:1px solid #8f8f8f;background:#fff;border-radius:2.5px"></div>
<span class="t td" style="left:489.2px;top:432.00px;font-size:12.5px;line-height:16px;color:#757575;letter-spacing:0.033px;">Загружена</span>
<span class="t td" style="left:701.5px;top:432.00px;font-size:12.5px;line-height:16px;color:#757575;letter-spacing:-0.569px;">RECEIPT_130983376</span>
<span class="t td" style="left:865px;top:432.00px;font-size:12.5px;line-height:16px;color:#757575;letter-spacing:-0.555px;">23.12.2024 10:41</span>
<span class="t td" style="left:1243px;top:432.00px;font-size:12.5px;line-height:16px;color:#757575;letter-spacing:-0.558px;">RE/000121</span>
<span class="t td" style="left:1363px;top:432.00px;font-size:12.5px;line-height:16px;color:#757575;letter-spacing:-0.338px;">Генликс ООО</span>
<span class="t td" style="left:1501px;top:432.00px;font-size:12.5px;line-height:16px;color:#757575;letter-spacing:-0.037px;">Готовая проду...</span>
<span class="t td" style="left:1621px;top:432.00px;font-size:12.5px;line-height:16px;color:#757575;letter-spacing:-0.089px;">Тест приемка</span>
<span class="t td" style="left:1759px;top:432.00px;font-size:12.5px;line-height:16px;color:#757575;letter-spacing:0.107px;">Велесстрой</span>
<div class="hl" style="left:322px;top:479px;width:1545px"></div>
<div class="b" style="left:330px;top:459px;width:14px;height:14px;border:1px solid #8f8f8f;background:#fff;border-radius:2.5px"></div>
<div class="b" style="left:384px;top:459px;width:14px;height:14px;background:#f9ee8b;border-radius:2.5px"></div>
<svg class="ic" style="left:384px;top:459px" width="14" height="14" viewBox="0 0 14 14" fill="none" stroke="#3a3a3a" stroke-width="1.5" stroke-linecap="round" stroke-linejoin="round"><path d="M3.5 7.4 5.9 9.8 10.6 4.5"/></svg>
<div class="b bd" style="left:489px;top:457.0px;width:66px;height:18px;border:1px solid #4fb320"></div>
<span class="t bdg m2" style="left:497.5px;top:458.00px;font-size:12.2px;line-height:16px;color:#48a81c;letter-spacing:0.066px;">Принята</span>
<span class="t td" style="left:701.5px;top:459.00px;font-size:12.5px;line-height:16px;color:#757575;letter-spacing:-0.569px;">RECEIPT_130983376</span>
<span class="t td" style="left:865px;top:459.00px;font-size:12.5px;line-height:16px;color:#757575;letter-spacing:-0.555px;">23.12.2024 10:41</span>
<span class="t td" style="left:985.3px;top:459.00px;font-size:12.5px;line-height:16px;color:#757575;letter-spacing:-0.555px;">23.12.2024 10:41</span>
<span class="t td" style="left:1105.4px;top:459.00px;font-size:12.5px;line-height:16px;color:#757575;letter-spacing:-0.462px;">24.01.2025 13:32</span>
<span class="t td" style="left:1243px;top:459.00px;font-size:12.5px;line-height:16px;color:#757575;letter-spacing:-0.558px;">RE/000121</span>
<span class="t td" style="left:1363px;top:459.00px;font-size:12.5px;line-height:16px;color:#757575;letter-spacing:-0.338px;">Генликс ООО</span>
<span class="t td" style="left:1501px;top:459.00px;font-size:12.5px;line-height:16px;color:#757575;letter-spacing:-0.037px;">Готовая проду...</span>
<span class="t td" style="left:1621px;top:459.00px;font-size:12.5px;line-height:16px;color:#757575;letter-spacing:-0.089px;">Тест приемка</span>
<span class="t td" style="left:1759px;top:459.00px;font-size:12.5px;line-height:16px;color:#757575;letter-spacing:0.107px;">Велесстрой</span>
<div class="hl" style="left:322px;top:506px;width:1545px"></div>
<div class="b" style="left:330px;top:486px;width:14px;height:14px;border:1px solid #8f8f8f;background:#fff;border-radius:2.5px"></div>
<div class="b" style="left:384px;top:486px;width:14px;height:14px;background:#f9ee8b;border-radius:2.5px"></div>
<svg class="ic" style="left:384px;top:486px" width="14" height="14" viewBox="0 0 14 14" fill="none" stroke="#3a3a3a" stroke-width="1.5" stroke-linecap="round" stroke-linejoin="round"><path d="M3.5 7.4 5.9 9.8 10.6 4.5"/></svg>
<div class="b bd" style="left:489px;top:484.0px;width:66px;height:18px;border:1px solid #4fb320"></div>
<span class="t bdg m2" style="left:497.5px;top:485.00px;font-size:12.2px;line-height:16px;color:#48a81c;letter-spacing:0.066px;">Принята</span>
<span class="t td" style="left:701.5px;top:486.00px;font-size:12.5px;line-height:16px;color:#757575;letter-spacing:-0.569px;">RECEIPT_130983376</span>
<span class="t td" style="left:865px;top:486.00px;font-size:12.5px;line-height:16px;color:#757575;letter-spacing:-0.555px;">23.12.2024 10:41</span>
<span class="t td" style="left:985.3px;top:486.00px;font-size:12.5px;line-height:16px;color:#757575;letter-spacing:-0.555px;">23.12.2024 10:41</span>
<span class="t td" style="left:1105.4px;top:486.00px;font-size:12.5px;line-height:16px;color:#757575;letter-spacing:-0.462px;">24.01.2025 13:32</span>
<span class="t td" style="left:1243px;top:486.00px;font-size:12.5px;line-height:16px;color:#757575;letter-spacing:-0.558px;">RE/000121</span>
<span class="t td" style="left:1363px;top:486.00px;font-size:12.5px;line-height:16px;color:#757575;letter-spacing:-0.338px;">Генликс ООО</span>
<span class="t td" style="left:1501px;top:486.00px;font-size:12.5px;line-height:16px;color:#757575;letter-spacing:-0.037px;">Готовая проду...</span>
<span class="t td" style="left:1621px;top:486.00px;font-size:12.5px;line-height:16px;color:#757575;letter-spacing:-0.089px;">Тест приемка</span>
<span class="t td" style="left:1759px;top:486.00px;font-size:12.5px;line-height:16px;color:#757575;letter-spacing:0.107px;">Велесстрой</span>
<div class="hl" style="left:322px;top:533px;width:1545px"></div>
<div class="b" style="left:330px;top:513px;width:14px;height:14px;border:1px solid #8f8f8f;background:#fff;border-radius:2.5px"></div>
<div class="b" style="left:384px;top:513px;width:14px;height:14px;border:1px solid #8f8f8f;background:#fff;border-radius:2.5px"></div>
<span class="t td" style="left:489.2px;top:513.00px;font-size:12.5px;line-height:16px;color:#757575;letter-spacing:0.033px;">Загружена</span>
<span class="t td" style="left:701.5px;top:513.00px;font-size:12.5px;line-height:16px;color:#757575;letter-spacing:-0.569px;">RECEIPT_130983376</span>
<span class="t td" style="left:865px;top:513.00px;font-size:12.5px;line-height:16px;color:#757575;letter-spacing:-0.555px;">23.12.2024 10:41</span>
<span class="t td" style="left:1243px;top:513.00px;font-size:12.5px;line-height:16px;color:#757575;letter-spacing:-0.558px;">RE/000121</span>
<span class="t td" style="left:1363px;top:513.00px;font-size:12.5px;line-height:16px;color:#757575;letter-spacing:-0.338px;">Генликс ООО</span>
<span class="t td" style="left:1501px;top:513.00px;font-size:12.5px;line-height:16px;color:#757575;letter-spacing:-0.037px;">Готовая проду...</span>
<span class="t td" style="left:1621px;top:513.00px;font-size:12.5px;line-height:16px;color:#757575;letter-spacing:-0.089px;">Тест приемка</span>
<span class="t td" style="left:1759px;top:513.00px;font-size:12.5px;line-height:16px;color:#757575;letter-spacing:0.107px;">Велесстрой</span>
<div class="hl" style="left:322px;top:560px;width:1545px"></div>
<div class="b" style="left:330px;top:540px;width:14px;height:14px;border:1px solid #8f8f8f;background:#fff;border-radius:2.5px"></div>
<div class="b" style="left:384px;top:540px;width:14px;height:14px;background:#f9ee8b;border-radius:2.5px"></div>
<svg class="ic" style="left:384px;top:540px" width="14" height="14" viewBox="0 0 14 14" fill="none" stroke="#3a3a3a" stroke-width="1.5" stroke-linecap="round" stroke-linejoin="round"><path d="M3.5 7.4 5.9 9.8 10.6 4.5"/></svg>
<div class="b bd" style="left:489px;top:538.0px;width:66px;height:18px;border:1px solid #4fb320"></div>
<span class="t bdg m2" style="left:497.5px;top:539.00px;font-size:12.2px;line-height:16px;color:#48a81c;letter-spacing:0.066px;">Принята</span>
<span class="t td" style="left:701.5px;top:540.00px;font-size:12.5px;line-height:16px;color:#757575;letter-spacing:-0.569px;">RECEIPT_130983376</span>
<span class="t td" style="left:865px;top:540.00px;font-size:12.5px;line-height:16px;color:#757575;letter-spacing:-0.555px;">23.12.2024 10:41</span>
<span class="t td" style="left:985.3px;top:540.00px;font-size:12.5px;line-height:16px;color:#757575;letter-spacing:-0.555px;">23.12.2024 10:41</span>
<span class="t td" style="left:1105.4px;top:540.00px;font-size:12.5px;line-height:16px;color:#757575;letter-spacing:-0.462px;">24.01.2025 13:32</span>
<span class="t td" style="left:1243px;top:540.00px;font-size:12.5px;line-height:16px;color:#757575;letter-spacing:-0.558px;">RE/000121</span>
<span class="t td" style="left:1363px;top:540.00px;font-size:12.5px;line-height:16px;color:#757575;letter-spacing:-0.338px;">Генликс ООО</span>
<span class="t td" style="left:1501px;top:540.00px;font-size:12.5px;line-height:16px;color:#757575;letter-spacing:-0.037px;">Готовая проду...</span>
<span class="t td" style="left:1621px;top:540.00px;font-size:12.5px;line-height:16px;color:#757575;letter-spacing:-0.089px;">Тест приемка</span>
<span class="t td" style="left:1759px;top:540.00px;font-size:12.5px;line-height:16px;color:#757575;letter-spacing:0.107px;">Велесстрой</span>
<div class="hl" style="left:322px;top:587px;width:1545px"></div>
<div class="b" style="left:330px;top:567px;width:14px;height:14px;border:1px solid #8f8f8f;background:#fff;border-radius:2.5px"></div>
<div class="b" style="left:384px;top:567px;width:14px;height:14px;border:1px solid #8f8f8f;background:#fff;border-radius:2.5px"></div>
<div class="b bd" style="left:489px;top:565.0px;width:68px;height:18px;border:1px solid #dcc138"></div>
<span class="t bdg m2" style="left:497.5px;top:566.00px;font-size:12.2px;line-height:16px;color:#cfae1c;letter-spacing:0.058px;">В работе</span>
<span class="t td" style="left:701.5px;top:567.00px;font-size:12.5px;line-height:16px;color:#757575;letter-spacing:-0.569px;">RECEIPT_130983376</span>
<span class="t td" style="left:865px;top:567.00px;font-size:12.5px;line-height:16px;color:#757575;letter-spacing:-0.555px;">23.12.2024 10:41</span>
<span class="t td" style="left:985.3px;top:567.00px;font-size:12.5px;line-height:16px;color:#757575;letter-spacing:-0.555px;">23.12.2024 10:41</span>
<span class="t td" style="left:1243px;top:567.00px;font-size:12.5px;line-height:16px;color:#757575;letter-spacing:-0.558px;">RE/000121</span>
<span class="t td" style="left:1363px;top:567.00px;font-size:12.5px;line-height:16px;color:#757575;letter-spacing:-0.338px;">Генликс ООО</span>
<span class="t td" style="left:1501px;top:567.00px;font-size:12.5px;line-height:16px;color:#757575;letter-spacing:-0.037px;">Готовая проду...</span>
<span class="t td" style="left:1621px;top:567.00px;font-size:12.5px;line-height:16px;color:#757575;letter-spacing:-0.089px;">Тест приемка</span>
<span class="t td" style="left:1759px;top:567.00px;font-size:12.5px;line-height:16px;color:#757575;letter-spacing:0.107px;">Велесстрой</span>
<div class="b" style="left:1884px;top:291px;width:8px;height:297px;background:#f4f4f9;border-radius:4px;"></div>
<div class="b" style="left:1886px;top:293px;width:4px;height:63px;background:#d3d3d9;border-radius:2px;"></div>
<svg class="ic" style="left:319px;top:603px" width="28" height="28" viewBox="0 0 28 28" fill="none" stroke="#4a4a4a" stroke-linecap="round" stroke-linejoin="round"><g transform="translate(14.90 14.90) scale(0.7917 0.7917) translate(-12 -12)" stroke-width="2.00"><path d="M3 12h.01"/><path d="M3 18h.01"/><path d="M3 6h.01"/><path d="M8 12h13"/><path d="M8 18h13"/><path d="M8 6h13"/></g></svg>
<svg class="ic" style="left:351px;top:603px" width="28" height="28" viewBox="0 0 28 28" fill="none" stroke="#4a4a4a" stroke-linecap="round" stroke-linejoin="round"><g transform="translate(14.90 14.90) scale(0.7917 0.7917) translate(-12 -12)" stroke-width="2.00"><rect x="3" y="3" width="18" height="18" rx="2"/><path d="M9 3v18"/><path d="M3 9h18"/></g></svg>
<svg class="ic" style="left:383px;top:603px" width="28" height="28" viewBox="0 0 28 28" fill="none" stroke="#4a4a4a" stroke-linecap="round" stroke-linejoin="round"><g transform="translate(14.90 14.90) scale(0.7125 0.6808) translate(-12 -12)" stroke-width="2.27"><path d="M8 2v4"/><path d="M16 2v4"/><rect width="18" height="18" x="3" y="4" rx="2"/><path d="M3 10h18"/></g></svg>
<svg class="ic" style="left:415px;top:603px" width="28" height="28" viewBox="0 0 28 28" fill="none" stroke="#4a4a4a" stroke-linecap="round" stroke-linejoin="round"><g transform="translate(14.90 14.90) scale(0.6808 0.6808) translate(-12 -12)" stroke-width="2.33"><polygon points="22 3 2 3 10 12.46 10 19 14 21 14 12.46 22 3"/></g></svg>
<svg class="ic" style="left:447px;top:603px" width="28" height="28" viewBox="0 0 28 28" fill="none" stroke="#4a4a4a" stroke-linecap="round" stroke-linejoin="round"><g transform="translate(14.90 14.90) scale(0.6729 0.6729) translate(-12 -12)" stroke-width="2.35"><path d="M12.00 1.80 L12.33 1.83 L12.66 1.93 L12.98 2.09 L13.27 2.33 L13.54 2.66 L13.72 3.37 L13.85 4.08 L14.03 4.42 L14.22 4.69 L14.41 4.89 L14.62 5.05 L14.83 5.16 L15.06 5.24 L15.32 5.27 L15.60 5.26 L15.92 5.21 L16.30 5.09 L16.89 4.68 L17.51 4.31 L17.94 4.26 L18.32 4.30 L18.66 4.41 L18.95 4.57 L19.21 4.79 L19.43 5.05 L19.59 5.34 L19.70 5.68 L19.74 6.06 L19.69 6.49 L19.32 7.11 L18.91 7.70 L18.79 8.08 L18.74 8.40 L18.73 8.68 L18.76 8.94 L18.84 9.17 L18.95 9.38 L19.11 9.59 L19.31 9.78 L19.58 9.97 L19.92 10.15 L20.63 10.28 L21.34 10.46 L21.67 10.73 L21.91 11.02 L22.07 11.34 L22.17 11.67 L22.20 12.00 L22.17 12.33 L22.07 12.66 L21.91 12.98 L21.67 13.27 L21.34 13.54 L20.63 13.72 L19.92 13.85 L19.58 14.03 L19.31 14.22 L19.11 14.41 L18.95 14.62 L18.84 14.83 L18.76 15.06 L18.73 15.32 L18.74 15.60 L18.79 15.92 L18.91 16.30 L19.32 16.89 L19.69 17.51 L19.74 17.94 L19.70 18.32 L19.59 18.66 L19.43 18.95 L19.21 19.21 L18.95 19.43 L18.66 19.59 L18.32 19.70 L17.94 19.74 L17.51 19.69 L16.89 19.32 L16.30 18.91 L15.92 18.79 L15.60 18.74 L15.32 18.73 L15.06 18.76 L14.83 18.84 L14.62 18.95 L14.41 19.11 L14.22 19.31 L14.03 19.58 L13.85 19.92 L13.72 20.63 L13.54 21.34 L13.27 21.67 L12.98 21.91 L12.66 22.07 L12.33 22.17 L12.00 22.20 L11.67 22.17 L11.34 22.07 L11.02 21.91 L10.73 21.67 L10.46 21.34 L10.28 20.63 L10.15 19.92 L9.97 19.58 L9.78 19.31 L9.59 19.11 L9.38 18.95 L9.17 18.84 L8.94 18.76 L8.68 18.73 L8.40 18.74 L8.08 18.79 L7.70 18.91 L7.11 19.32 L6.49 19.69 L6.06 19.74 L5.68 19.70 L5.34 19.59 L5.05 19.43 L4.79 19.21 L4.57 18.95 L4.41 18.66 L4.30 18.32 L4.26 17.94 L4.31 17.51 L4.68 16.89 L5.09 16.30 L5.21 15.92 L5.26 15.60 L5.27 15.32 L5.24 15.06 L5.16 14.83 L5.05 14.62 L4.89 14.41 L4.69 14.22 L4.42 14.03 L4.08 13.85 L3.37 13.72 L2.66 13.54 L2.33 13.27 L2.09 12.98 L1.93 12.66 L1.83 12.33 L1.80 12.00 L1.83 11.67 L1.93 11.34 L2.09 11.02 L2.33 10.73 L2.66 10.46 L3.37 10.28 L4.08 10.15 L4.42 9.97 L4.69 9.78 L4.89 9.59 L5.05 9.38 L5.16 9.17 L5.24 8.94 L5.27 8.68 L5.26 8.40 L5.21 8.08 L5.09 7.70 L4.68 7.11 L4.31 6.49 L4.26 6.06 L4.30 5.68 L4.41 5.34 L4.57 5.05 L4.79 4.79 L5.05 4.57 L5.34 4.41 L5.68 4.30 L6.06 4.26 L6.49 4.31 L7.11 4.68 L7.70 5.09 L8.08 5.21 L8.40 5.26 L8.68 5.27 L8.94 5.24 L9.17 5.16 L9.38 5.05 L9.59 4.89 L9.78 4.69 L9.97 4.42 L10.15 4.08 L10.28 3.37 L10.46 2.66 L10.73 2.33 L11.02 2.09 L11.34 1.93 L11.67 1.83 L12.00 1.80Z"/><circle cx="12" cy="12" r="3"/></g></svg>
<svg class="ic" style="left:479px;top:603px" width="28" height="28" viewBox="0 0 28 28" fill="none" stroke="#4a4a4a" stroke-linecap="round" stroke-linejoin="round"><g transform="translate(14.90 14.90) scale(0.7917 0.7917) translate(-12 -12)" stroke-width="2.00"><path d="M9.700 5.700H22.300M9.700 12H22.300M9.700 18.300H22.300"/><g stroke-width="1.300"><path d="M3.200 3.600 4.900 2.600V7.500"/><path d="M2.900 10.300c.3-1 2.600-1.300 2.800.1.100 1-1.500 2-3 4.100h3.300"/><path d="M2.900 15.700h2.800l-1.700 2.100c1.300-.1 2.100.7 1.900 1.800-.3 1.400-2.600 1.300-3.200.1"/></g></g></svg>
<svg class="ic" style="left:511px;top:603px" width="28" height="28" viewBox="0 0 28 28" fill="none" stroke="#4a4a4a" stroke-linecap="round" stroke-linejoin="round"><g transform="translate(14.90 14.90) scale(0.7046 0.7046) translate(-12 -12)" stroke-width="2.25"><circle cx="12" cy="12" r="10"/><path d="M8 12h8"/><path d="M12 8v8"/></g></svg>
<svg class="ic" style="left:543px;top:603px" width="28" height="28" viewBox="0 0 28 28" fill="none" stroke="#4a4a4a" stroke-linecap="round" stroke-linejoin="round"><g transform="translate(14.90 14.90) scale(0.7917 0.7917) translate(-12 -12)" stroke-width="2.00"><path d="M21 13v6a2 2 0 0 1-2 2H5a2 2 0 0 1-2-2V5a2 2 0 0 1 2-2h6"/><path d="m21 3-9 9"/><path d="M15 3h6v6"/></g></svg>
<svg class="ic" style="left:575px;top:603px" width="28" height="28" viewBox="0 0 28 28" fill="none" stroke="#4a4a4a" stroke-linecap="round" stroke-linejoin="round"><g transform="translate(14.90 14.90) scale(0.7125 0.6492) translate(-12 -12)" stroke-width="2.33"><path d="m17 2 4 4-4 4"/><path d="M3 11v-1a4 4 0 0 1 4-4h14"/><path d="m7 22-4-4 4-4"/><path d="M21 13v1a4 4 0 0 1-4 4H3"/></g></svg>
<div class="b" style="left:842px;top:610px;width:16px;height:16px;background:#f9ee8b;border-radius:2.5px"></div>
<svg class="ic" style="left:842px;top:610px" width="16" height="16" viewBox="0 0 14 14" fill="none" stroke="#3a3a3a" stroke-width="1.5" stroke-linecap="round" stroke-linejoin="round"><path d="M3.5 7.4 5.9 9.8 10.6 4.5"/></svg>
<span class="t bt" style="left:866.3px;top:609.00px;font-size:14.5px;line-height:19px;color:#4a4a4a;letter-spacing:0.068px;">Активные</span>
<div class="b" style="left:941px;top:603px;width:137px;height:30px;background:#f4f4f9;border-radius:15.0px"></div>
<span class="t bt" style="left:957.5px;top:609.00px;font-size:14.5px;line-height:19px;color:#4a4a4a;letter-spacing:0.277px;">Редактировать</span>
<div class="b" style="left:1086px;top:603px;width:89px;height:30px;background:#f4f4f9;border-radius:15.0px"></div>
<span class="t bt" style="left:1102.5px;top:609.00px;font-size:14.5px;line-height:19px;color:#4a4a4a;letter-spacing:-0.093px;">Удалить</span>
<div class="b" style="left:1183px;top:603px;width:113.5px;height:30px;background:#f4f4f9;border-radius:15.0px"></div>
<span class="t bt" style="left:1199.5px;top:609.00px;font-size:14.5px;line-height:19px;color:#4a4a4a;letter-spacing:0.347px;">Копировать</span>
<div class="b" style="left:1305px;top:603px;width:99px;height:30px;background:#f4f4f9;border-radius:15.0px"></div>
<span class="t bt" style="left:1321.5px;top:609.00px;font-size:14.5px;line-height:19px;color:#4a4a4a;letter-spacing:0.272px;">Добавить</span>
<div class="b" style="left:1412px;top:603px;width:90px;height:30px;background:#f4f4f9;border-radius:15.0px"></div>
<span class="t bt" style="left:1428.5px;top:609.00px;font-size:14.5px;line-height:19px;color:#4a4a4a;letter-spacing:0.207px;">Закрыть</span>
<div class="b" style="left:1510px;top:603px;width:177px;height:30px;background:#f4f4f9;border-radius:15.0px"></div>
<span class="t bt" style="left:1526.5px;top:609.00px;font-size:14.5px;line-height:19px;color:#4a4a4a;letter-spacing:0.225px;">Импорт поступления</span>
<div class="b" style="left:1695px;top:603px;width:197px;height:30px;background:#f4f4f9;border-radius:15.0px"></div>
<span class="t bt" style="left:1711.5px;top:609.00px;font-size:14.5px;line-height:19px;color:#4a4a4a;letter-spacing:0.242px;">Транспортные единицы</span>
<div class="b" style="left:310px;top:669px;width:167.2px;height:32px;background:#f9f9fc;border-radius:10px 10px 0 0;"></div>
<span class="t tb" style="left:322px;top:675.00px;font-size:14.5px;line-height:19px;color:#4a4a4a;letter-spacing:0.267px;">Строка поступления</span>
<div class="b" style="left:485px;top:669px;width:104px;height:32px;background:#f9f9fc;border-radius:10px 10px 0 0;"></div>
<span class="t tb" style="left:497px;top:675.00px;font-size:14.5px;line-height:19px;color:#4a4a4a;letter-spacing:-0.002px;">По товарам</span>
<div class="b" style="left:597.3px;top:669px;width:103.7px;height:32px;background:#fff;border-radius:10px 10px 0 0;"></div>
<span class="t tb" style="left:609.3px;top:675.00px;font-size:14.5px;line-height:19px;color:#4a4a4a;letter-spacing:0.094px;">По партиям</span>
<div class="b" style="left:709.2px;top:669px;width:73.9px;height:32px;background:#f9f9fc;border-radius:10px 10px 0 0;"></div>
<span class="t tb" style="left:721.2px;top:675.00px;font-size:14.5px;line-height:19px;color:#4a4a4a;letter-spacing:0.103px;">Задачи</span>
<div class="b" style="left:791.2px;top:669px;width:124.6px;height:32px;background:#f9f9fc;border-radius:10px 10px 0 0;"></div>
<span class="t tb" style="left:803.2px;top:675.00px;font-size:14.5px;line-height:19px;color:#4a4a4a;letter-spacing:0.121px;">Принятая тара</span>
<div class="b" style="left:924px;top:669px;width:150.6px;height:32px;background:#f9f9fc;border-radius:10px 10px 0 0;"></div>
<span class="t tb" style="left:936px;top:675.00px;font-size:14.5px;line-height:19px;color:#4a4a4a;letter-spacing:0.264px;">Входной контроль</span>
<div class="b" style="left:1083px;top:669px;width:126.2px;height:32px;background:#f9f9fc;border-radius:10px 10px 0 0;"></div>
<span class="t tb" style="left:1095px;top:675.00px;font-size:14.5px;line-height:19px;color:#4a4a4a;letter-spacing:-0.170px;">MobileSMARTS</span>
<div class="b" style="left:310px;top:699px;width:1594px;height:321px;background:#fff;border-radius:0 12px 12px 12px;"></div>
<span class="t m th" style="left:330.2px;top:721.00px;font-size:16px;line-height:21px;color:#474747;letter-spacing:0.328px;">№</span>
<span class="t m th" style="left:368px;top:721.00px;font-size:16px;line-height:21px;color:#474747;letter-spacing:0.716px;">Наименование</span>
<span class="t m th" style="left:608.3px;top:721.00px;font-size:16px;line-height:21px;color:#474747;letter-spacing:0.891px;">Артикул</span>
<span class="t m th" style="left:698px;top:721.00px;font-size:16px;line-height:21px;color:#474747;letter-spacing:0.648px;">Код</span>
<span class="t m th" style="left:818px;top:721.00px;font-size:16px;line-height:21px;color:#474747;letter-spacing:1.073px;">Штрихкод</span>
<span class="t m th" style="left:934.2px;top:721.00px;font-size:16px;line-height:21px;color:#474747;letter-spacing:0.082px;">Ед. изм.</span>
<span class="t m th" style="left:1018px;top:721.00px;font-size:16px;line-height:21px;color:#474747;letter-spacing:0.739px;">Описание</span>
<span class="t m th" style="left:1122.2px;top:721.00px;font-size:16px;line-height:21px;color:#474747;letter-spacing:0.593px;">План. кол-во</span>
<span class="t m th" style="left:1249px;top:721.00px;font-size:16px;line-height:21px;color:#474747;letter-spacing:0.902px;">Принято</span>
<span class="t m th" style="left:1338px;top:721.00px;font-size:16px;line-height:21px;color:#474747;letter-spacing:0.825px;">Расхождения</span>
<span class="t m th" style="left:1466px;top:721.00px;font-size:16px;line-height:21px;color:#474747;letter-spacing:0.502px;">Цена товара</span>
<span class="t m th" style="left:1590px;top:721.00px;font-size:16px;line-height:21px;color:#474747;letter-spacing:0.573px;">Сумма расхожд.</span>
<span class="t m th" style="left:1744px;top:721.00px;font-size:16px;line-height:21px;color:#474747;letter-spacing:0.766px;">Примечание</span>
<div class="hl" style="left:322px;top:782px;width:1545px"></div>
<span class="t td" style="left:330.5px;top:760.00px;font-size:12.5px;line-height:16px;color:#757575;">1</span>
<span class="t td" style="left:368px;top:760.00px;font-size:12.5px;line-height:16px;color:#757575;letter-spacing:-0.253px;">Зефир Конфа 1/90 гр</span>
<span class="t td" style="left:698px;top:760.00px;font-size:12.5px;line-height:16px;color:#757575;letter-spacing:-0.148px;">17040200376</span>
<span class="t td" style="left:818px;top:760.00px;font-size:12.5px;line-height:16px;color:#757575;letter-spacing:0.077px;">4810028003268</span>
<span class="t td" style="left:938.3px;top:760.00px;font-size:12.5px;line-height:16px;color:#757575;letter-spacing:-0.900px;">шт</span>
<span class="t td" style="left:1018px;top:760.00px;font-size:12.5px;line-height:16px;color:#757575;letter-spacing:0.033px;">без партии</span>
<div class="b bd" style="left:1122px;top:758.0px;width:29px;height:18px;border:1px solid #3aa0ee"></div>
<span class="t bdg" style="left:1130.5px;top:759.00px;font-size:12px;line-height:16px;color:#3aa0ee;">10</span>
<div class="b bd" style="left:1249px;top:758.0px;width:29px;height:18px;border:1px solid #4fb320"></div>
<span class="t bdg" style="left:1257.5px;top:759.00px;font-size:12px;line-height:16px;color:#48a81c;">10</span>
<div class="hl" style="left:322px;top:813px;width:1545px"></div>
<span class="t td" style="left:330.5px;top:791.00px;font-size:12.5px;line-height:16px;color:#757575;">2</span>
<span class="t td" style="left:368px;top:791.00px;font-size:12.5px;line-height:16px;color:#757575;letter-spacing:-0.123px;">Коллекция шоколадных конфет Ава...</span>
<span class="t td" style="left:698px;top:791.00px;font-size:12.5px;line-height:16px;color:#757575;letter-spacing:-0.148px;">17040200376</span>
<span class="t td" style="left:818px;top:791.00px;font-size:12.5px;line-height:16px;color:#757575;letter-spacing:0.077px;">4810028003268</span>
<span class="t td" style="left:938.3px;top:791.00px;font-size:12.5px;line-height:16px;color:#757575;letter-spacing:-0.900px;">шт</span>
<span class="t td" style="left:1018px;top:791.00px;font-size:12.5px;line-height:16px;color:#757575;letter-spacing:0.033px;">без партии</span>
<div class="b bd" style="left:1122px;top:789.0px;width:29px;height:18px;border:1px solid #3aa0ee"></div>
<span class="t bdg" style="left:1130.5px;top:790.00px;font-size:12px;line-height:16px;color:#3aa0ee;">10</span>
<div class="b bd" style="left:1249px;top:789.0px;width:29px;height:18px;border:1px solid #4fb320"></div>
<span class="t bdg" style="left:1257.5px;top:790.00px;font-size:12px;line-height:16px;color:#48a81c;">10</span>
<div class="hl" style="left:322px;top:844px;width:1545px"></div>
<span class="t td" style="left:330.5px;top:822.00px;font-size:12.5px;line-height:16px;color:#757575;">3</span>
<span class="t td" style="left:368px;top:822.00px;font-size:12.5px;line-height:16px;color:#757575;letter-spacing:-0.198px;">Конф Ferrero Rocher с нач из крема...</span>
<span class="t td" style="left:698px;top:822.00px;font-size:12.5px;line-height:16px;color:#757575;letter-spacing:-0.148px;">17040200376</span>
<span class="t td" style="left:818px;top:822.00px;font-size:12.5px;line-height:16px;color:#757575;letter-spacing:0.077px;">4810028003268</span>
<span class="t td" style="left:938.3px;top:822.00px;font-size:12.5px;line-height:16px;color:#757575;letter-spacing:-0.900px;">шт</span>
<span class="t td" style="left:1018px;top:822.00px;font-size:12.5px;line-height:16px;color:#757575;letter-spacing:0.033px;">без партии</span>
<div class="b bd" style="left:1122px;top:820.0px;width:26px;height:18px;border:1px solid #3aa0ee"></div>
<span class="t bdg" style="left:1130.5px;top:821.00px;font-size:12px;line-height:16px;color:#3aa0ee;">11</span>
<div class="b bd" style="left:1342px;top:820.0px;width:31px;height:18px;border:1px solid #d8194e"></div>
<span class="t bdg" style="left:1350px;top:821.00px;font-size:12px;line-height:16px;color:#d8194e;">-11</span>
<div class="hl" style="left:322px;top:875px;width:1545px"></div>
<span class="t td" style="left:330.5px;top:853.00px;font-size:12.5px;line-height:16px;color:#757575;">4</span>
<span class="t td" style="left:368px;top:853.00px;font-size:12.5px;line-height:16px;color:#757575;letter-spacing:-0.118px;">Конфеты Shooers Irish Cooffee 1/150г</span>
<span class="t td" style="left:698px;top:853.00px;font-size:12.5px;line-height:16px;color:#757575;letter-spacing:-0.148px;">17040200376</span>
<span class="t td" style="left:818px;top:853.00px;font-size:12.5px;line-height:16px;color:#757575;letter-spacing:0.077px;">4810028003268</span>
<span class="t td" style="left:938.3px;top:853.00px;font-size:12.5px;line-height:16px;color:#757575;letter-spacing:-0.900px;">шт</span>
<span class="t td" style="left:1018px;top:853.00px;font-size:12.5px;line-height:16px;color:#757575;letter-spacing:0.033px;">без партии</span>
<div class="b bd" style="left:1122px;top:851.0px;width:29px;height:18px;border:1px solid #3aa0ee"></div>
<span class="t bdg" style="left:1130.5px;top:852.00px;font-size:12px;line-height:16px;color:#3aa0ee;">14</span>
<div class="b bd" style="left:1342px;top:851.0px;width:34px;height:18px;border:1px solid #d8194e"></div>
<span class="t bdg" style="left:1350px;top:852.00px;font-size:12px;line-height:16px;color:#d8194e;">-14</span>
<div class="hl" style="left:322px;top:906px;width:1545px"></div>
<span class="t td" style="left:330.5px;top:884.00px;font-size:12.5px;line-height:16px;color:#757575;">5</span>
<span class="t td" style="left:368px;top:884.00px;font-size:12.5px;line-height:16px;color:#757575;letter-spacing:0.013px;">Конф Charmantier-chocolate 1/158г...</span>
<span class="t td" style="left:698px;top:884.00px;font-size:12.5px;line-height:16px;color:#757575;letter-spacing:-0.148px;">17040200376</span>
<span class="t td" style="left:818px;top:884.00px;font-size:12.5px;line-height:16px;color:#757575;letter-spacing:0.077px;">4810028003268</span>
<span class="t td" style="left:938.3px;top:884.00px;font-size:12.5px;line-height:16px;color:#757575;letter-spacing:-0.900px;">шт</span>
<span class="t td" style="left:1018px;top:884.00px;font-size:12.5px;line-height:16px;color:#757575;letter-spacing:0.033px;">без партии</span>
<div class="b bd" style="left:1122px;top:882.0px;width:29px;height:18px;border:1px solid #3aa0ee"></div>
<span class="t bdg" style="left:1130.5px;top:883.00px;font-size:12px;line-height:16px;color:#3aa0ee;">10</span>
<div class="b bd" style="left:1249px;top:882.0px;width:29px;height:18px;border:1px solid #4fb320"></div>
<span class="t bdg" style="left:1257.5px;top:883.00px;font-size:12px;line-height:16px;color:#48a81c;">10</span>
<div class="hl" style="left:322px;top:937px;width:1545px"></div>
<span class="t td" style="left:330.5px;top:915.00px;font-size:12.5px;line-height:16px;color:#757575;">6</span>
<span class="t td" style="left:368px;top:915.00px;font-size:12.5px;line-height:16px;color:#757575;letter-spacing:-0.229px;">Конфеты АВК Кремо эйри ореховый в...</span>
<span class="t td" style="left:698px;top:915.00px;font-size:12.5px;line-height:16px;color:#757575;letter-spacing:-0.148px;">17040200376</span>
<span class="t td" style="left:818px;top:915.00px;font-size:12.5px;line-height:16px;color:#757575;letter-spacing:0.077px;">4810028003268</span>
<span class="t td" style="left:938.3px;top:915.00px;font-size:12.5px;line-height:16px;color:#757575;letter-spacing:-0.900px;">шт</span>
<span class="t td" style="left:1018px;top:915.00px;font-size:12.5px;line-height:16px;color:#757575;letter-spacing:0.033px;">без партии</span>
<div class="b bd" style="left:1122px;top:913.0px;width:29px;height:18px;border:1px solid #3aa0ee"></div>
<span class="t bdg" style="left:1130.5px;top:914.00px;font-size:12px;line-height:16px;color:#3aa0ee;">10</span>
<div class="b bd" style="left:1342px;top:913.0px;width:34px;height:18px;border:1px solid #d8194e"></div>
<span class="t bdg" style="left:1350px;top:914.00px;font-size:12px;line-height:16px;color:#d8194e;">-10</span>
<div class="hl" style="left:322px;top:968px;width:1545px"></div>
<span class="t td" style="left:330.5px;top:946.00px;font-size:12.5px;line-height:16px;color:#757575;">7</span>
<span class="t td" style="left:368px;top:946.00px;font-size:12.5px;line-height:16px;color:#757575;letter-spacing:-0.224px;">Конфеты желейные Yummi Gummi To...</span>
<span class="t td" style="left:698px;top:946.00px;font-size:12.5px;line-height:16px;color:#757575;letter-spacing:-0.148px;">17040200376</span>
<span class="t td" style="left:818px;top:946.00px;font-size:12.5px;line-height:16px;color:#757575;letter-spacing:0.077px;">4810028003268</span>
<span class="t td" style="left:938.3px;top:946.00px;font-size:12.5px;line-height:16px;color:#757575;letter-spacing:-0.900px;">шт</span>
<span class="t td" style="left:1018px;top:946.00px;font-size:12.5px;line-height:16px;color:#757575;letter-spacing:0.033px;">без партии</span>
<div class="b bd" style="left:1122px;top:944.0px;width:28px;height:18px;border:1px solid #3aa0ee"></div>
<span class="t bdg" style="left:1130.5px;top:945.00px;font-size:12px;line-height:16px;color:#3aa0ee;">15</span>
<div class="b bd" style="left:1342px;top:944.0px;width:32.5px;height:18px;border:1px solid #d8194e"></div>
<span class="t bdg" style="left:1350px;top:945.00px;font-size:12px;line-height:16px;color:#d8194e;">-15</span>
<div class="b" style="left:1884px;top:753px;width:8px;height:216px;background:#f4f4f9;border-radius:4px;"></div>
<div class="b" style="left:1886px;top:755px;width:4px;height:103px;background:#d3d3d9;border-radius:2px;"></div>
<svg class="ic" style="left:319px;top:981px" width="28" height="28" viewBox="0 0 28 28" fill="none" stroke="#4a4a4a" stroke-linecap="round" stroke-linejoin="round"><g transform="translate(14.90 14.90) scale(0.7917 0.7917) translate(-12 -12)" stroke-width="2.00"><path d="M3 12h.01"/><path d="M3 18h.01"/><path d="M3 6h.01"/><path d="M8 12h13"/><path d="M8 18h13"/><path d="M8 6h13"/></g></svg>
<svg class="ic" style="left:351px;top:981px" width="28" height="28" viewBox="0 0 28 28" fill="none" stroke="#4a4a4a" stroke-linecap="round" stroke-linejoin="round"><g transform="translate(14.90 14.90) scale(0.7917 0.7917) translate(-12 -12)" stroke-width="2.00"><rect x="3" y="3" width="18" height="18" rx="2"/><path d="M9 3v18"/><path d="M3 9h18"/></g></svg>
<svg class="ic" style="left:383px;top:981px" width="28" height="28" viewBox="0 0 28 28" fill="none" stroke="#4a4a4a" stroke-linecap="round" stroke-linejoin="round"><g transform="translate(14.90 14.90) scale(0.6808 0.6808) translate(-12 -12)" stroke-width="2.33"><polygon points="22 3 2 3 10 12.46 10 19 14 21 14 12.46 22 3"/></g></svg>
<svg class="ic" style="left:415px;top:981px" width="28" height="28" viewBox="0 0 28 28" fill="none" stroke="#4a4a4a" stroke-linecap="round" stroke-linejoin="round"><g transform="translate(14.90 14.90) scale(0.6729 0.6729) translate(-12 -12)" stroke-width="2.35"><path d="M12.00 1.80 L12.33 1.83 L12.66 1.93 L12.98 2.09 L13.27 2.33 L13.54 2.66 L13.72 3.37 L13.85 4.08 L14.03 4.42 L14.22 4.69 L14.41 4.89 L14.62 5.05 L14.83 5.16 L15.06 5.24 L15.32 5.27 L15.60 5.26 L15.92 5.21 L16.30 5.09 L16.89 4.68 L17.51 4.31 L17.94 4.26 L18.32 4.30 L18.66 4.41 L18.95 4.57 L19.21 4.79 L19.43 5.05 L19.59 5.34 L19.70 5.68 L19.74 6.06 L19.69 6.49 L19.32 7.11 L18.91 7.70 L18.79 8.08 L18.74 8.40 L18.73 8.68 L18.76 8.94 L18.84 9.17 L18.95 9.38 L19.11 9.59 L19.31 9.78 L19.58 9.97 L19.92 10.15 L20.63 10.28 L21.34 10.46 L21.67 10.73 L21.91 11.02 L22.07 11.34 L22.17 11.67 L22.20 12.00 L22.17 12.33 L22.07 12.66 L21.91 12.98 L21.67 13.27 L21.34 13.54 L20.63 13.72 L19.92 13.85 L19.58 14.03 L19.31 14.22 L19.11 14.41 L18.95 14.62 L18.84 14.83 L18.76 15.06 L18.73 15.32 L18.74 15.60 L18.79 15.92 L18.91 16.30 L19.32 16.89 L19.69 17.51 L19.74 17.94 L19.70 18.32 L19.59 18.66 L19.43 18.95 L19.21 19.21 L18.95 19.43 L18.66 19.59 L18.32 19.70 L17.94 19.74 L17.51 19.69 L16.89 19.32 L16.30 18.91 L15.92 18.79 L15.60 18.74 L15.32 18.73 L15.06 18.76 L14.83 18.84 L14.62 18.95 L14.41 19.11 L14.22 19.31 L14.03 19.58 L13.85 19.92 L13.72 20.63 L13.54 21.34 L13.27 21.67 L12.98 21.91 L12.66 22.07 L12.33 22.17 L12.00 22.20 L11.67 22.17 L11.34 22.07 L11.02 21.91 L10.73 21.67 L10.46 21.34 L10.28 20.63 L10.15 19.92 L9.97 19.58 L9.78 19.31 L9.59 19.11 L9.38 18.95 L9.17 18.84 L8.94 18.76 L8.68 18.73 L8.40 18.74 L8.08 18.79 L7.70 18.91 L7.11 19.32 L6.49 19.69 L6.06 19.74 L5.68 19.70 L5.34 19.59 L5.05 19.43 L4.79 19.21 L4.57 18.95 L4.41 18.66 L4.30 18.32 L4.26 17.94 L4.31 17.51 L4.68 16.89 L5.09 16.30 L5.21 15.92 L5.26 15.60 L5.27 15.32 L5.24 15.06 L5.16 14.83 L5.05 14.62 L4.89 14.41 L4.69 14.22 L4.42 14.03 L4.08 13.85 L3.37 13.72 L2.66 13.54 L2.33 13.27 L2.09 12.98 L1.93 12.66 L1.83 12.33 L1.80 12.00 L1.83 11.67 L1.93 11.34 L2.09 11.02 L2.33 10.73 L2.66 10.46 L3.37 10.28 L4.08 10.15 L4.42 9.97 L4.69 9.78 L4.89 9.59 L5.05 9.38 L5.16 9.17 L5.24 8.94 L5.27 8.68 L5.26 8.40 L5.21 8.08 L5.09 7.70 L4.68 7.11 L4.31 6.49 L4.26 6.06 L4.30 5.68 L4.41 5.34 L4.57 5.05 L4.79 4.79 L5.05 4.57 L5.34 4.41 L5.68 4.30 L6.06 4.26 L6.49 4.31 L7.11 4.68 L7.70 5.09 L8.08 5.21 L8.40 5.26 L8.68 5.27 L8.94 5.24 L9.17 5.16 L9.38 5.05 L9.59 4.89 L9.78 4.69 L9.97 4.42 L10.15 4.08 L10.28 3.37 L10.46 2.66 L10.73 2.33 L11.02 2.09 L11.34 1.93 L11.67 1.83 L12.00 1.80Z"/><circle cx="12" cy="12" r="3"/></g></svg>
<svg class="ic" style="left:447px;top:981px" width="28" height="28" viewBox="0 0 28 28" fill="none" stroke="#4a4a4a" stroke-linecap="round" stroke-linejoin="round"><g transform="translate(14.90 14.90) scale(0.7917 0.7917) translate(-12 -12)" stroke-width="2.00"><path d="M9.700 5.700H22.300M9.700 12H22.300M9.700 18.300H22.300"/><g stroke-width="1.300"><path d="M3.200 3.600 4.900 2.600V7.500"/><path d="M2.900 10.300c.3-1 2.600-1.300 2.800.1.100 1-1.500 2-3 4.100h3.300"/><path d="M2.900 15.700h2.800l-1.700 2.100c1.300-.1 2.100.7 1.900 1.800-.3 1.400-2.600 1.300-3.200.1"/></g></g></svg>
<svg class="ic" style="left:479px;top:981px" width="28" height="28" viewBox="0 0 28 28" fill="none" stroke="#4a4a4a" stroke-linecap="round" stroke-linejoin="round"><g transform="translate(14.90 14.90) scale(0.7046 0.7046) translate(-12 -12)" stroke-width="2.25"><circle cx="12" cy="12" r="10"/><path d="M8 12h8"/><path d="M12 8v8"/></g></svg>
<svg class="ic" style="left:511px;top:981px" width="28" height="28" viewBox="0 0 28 28" fill="none" stroke="#4a4a4a" stroke-linecap="round" stroke-linejoin="round"><g transform="translate(14.90 14.90) scale(0.7917 0.7917) translate(-12 -12)" stroke-width="2.00"><path d="M21 13v6a2 2 0 0 1-2 2H5a2 2 0 0 1-2-2V5a2 2 0 0 1 2-2h6"/><path d="m21 3-9 9"/><path d="M15 3h6v6"/></g></svg>
<svg class="ic" style="left:543px;top:981px" width="28" height="28" viewBox="0 0 28 28" fill="none" stroke="#4a4a4a" stroke-linecap="round" stroke-linejoin="round"><g transform="translate(14.90 14.90) scale(0.7125 0.6492) translate(-12 -12)" stroke-width="2.33"><path d="m17 2 4 4-4 4"/><path d="M3 11v-1a4 4 0 0 1 4-4h14"/><path d="m7 22-4-4 4-4"/><path d="M21 13v1a4 4 0 0 1-4 4H3"/></g></svg>
<div class="b" style="left:1658px;top:988px;width:16px;height:16px;background:#f9ee8b;border-radius:2.5px"></div>
<svg class="ic" style="left:1658px;top:988px" width="16" height="16" viewBox="0 0 14 14" fill="none" stroke="#3a3a3a" stroke-width="1.5" stroke-linecap="round" stroke-linejoin="round"><path d="M3.5 7.4 5.9 9.8 10.6 4.5"/></svg>
<span class="t bt" style="left:1682.2px;top:987.00px;font-size:14.5px;line-height:19px;color:#4a4a4a;letter-spacing:0.225px;">Показать только расхождения</span>
<div class="b" style="left:310px;top:1048px;width:16px;height:16px;border:1px solid #8f8f8f;background:#fff;border-radius:2.5px"></div>
<span class="t bt" style="left:334.3px;top:1047.00px;font-size:14.5px;line-height:19px;color:#4a4a4a;letter-spacing:0.145px;">Включить корректировку на форме</span>
<div class="b" style="left:1410px;top:1032px;width:32px;height:32px;background:#fff;border-radius:16px;"></div>
<svg class="ic" style="left:1411px;top:1034px" width="28" height="28" viewBox="0 0 28 28" fill="none" stroke="#4a4a4a" stroke-linecap="round" stroke-linejoin="round"><g transform="translate(14.70 14.40) scale(0.7292 0.7292) translate(-12 -12)" stroke-width="2.10"><path d="M21 12a9 9 0 1 1-9-9c2.52 0 4.93 1 6.74 2.74L21 8"/><path d="M21 3v5h-5"/></g></svg>
<div class="b" style="left:1450px;top:1032px;width:127px;height:32px;background:#fff;border-radius:16px;"></div>
<span class="t bt" style="left:1466.3px;top:1039.00px;font-size:14.5px;line-height:19px;color:#4a4a4a;letter-spacing:0.280px;">Сохранить</span>
<svg class="ic" style="left:1539px;top:1034px" width="28" height="28" viewBox="0 0 28 28" fill="none" stroke="#4a4a4a" stroke-linecap="round" stroke-linejoin="round"><g transform="translate(14.30 14.40) scale(0.7500 0.7500) translate(-12 -12)" stroke-width="1.60"><path d="M15.2 3a2 2 0 0 1 1.4.6l3.800 3.800a2 2 0 0 1 .6 1.400V19a2 2 0 0 1-2 2H5a2 2 0 0 1-2-2V5a2 2 0 0 1 2-2z"/><path d="M17 21v-7a1 1 0 0 0-1-1H8a1 1 0 0 0-1 1v7"/><path d="M7 3v4a1 1 0 0 0 1 1h7"/></g></svg>
<div class="b" style="left:1585px;top:1032px;width:121px;height:32px;background:#fff;border-radius:16px;"></div>
<span class="t bt" style="left:1601.3px;top:1039.00px;font-size:14.5px;line-height:19px;color:#4a4a4a;letter-spacing:0.176px;">Отменить</span>
<svg class="ic" style="left:1668px;top:1034px" width="28" height="28" viewBox="0 0 28 28" fill="none" stroke="#4a4a4a" stroke-linecap="round" stroke-linejoin="round"><g transform="translate(14.30 14.40) scale(0.7500 0.7500) translate(-12 -12)" stroke-width="1.60"><path d="M10 5a2 2 0 0 0-1.344.519l-6.328 5.740a1 1 0 0 0 0 1.481l6.328 5.741A2 2 0 0 0 10 19h10a2 2 0 0 0 2-2V7a2 2 0 0 0-2-2z"/><path d="m12 9 6 6"/><path d="m18 9-6 6"/></g></svg>
<div class="b" style="left:1714.2px;top:1032px;width:72px;height:32px;background:#fff;border-radius:16px;"></div>
<span class="t bt" style="left:1730.5px;top:1039.00px;font-size:14.5px;line-height:19px;color:#4a4a4a;letter-spacing:-0.900px;">OK</span>
<svg class="ic" style="left:1748px;top:1034px" width="28" height="28" viewBox="0 0 28 28" fill="none" stroke="#4a4a4a" stroke-linecap="round" stroke-linejoin="round"><g transform="translate(14.00 14.40) scale(0.8125 0.8125) translate(-12 -12)" stroke-width="1.60"><path d="M20 6 9 17l-5-5"/></g></svg>
<div class="b" style="left:1794.2px;top:1032px;width:110px;height:32px;background:#fff;border-radius:16px;"></div>
<span class="t bt" style="left:1810.5px;top:1039.00px;font-size:14.5px;line-height:19px;color:#4a4a4a;letter-spacing:0.207px;">Закрыть</span>
<svg class="ic" style="left:1866px;top:1034px" width="28" height="28" viewBox="0 0 28 28" fill="none" stroke="#4a4a4a" stroke-linecap="round" stroke-linejoin="round"><g transform="translate(14.30 14.40) scale(1.0417 1.0417) translate(-12 -12)" stroke-width="1.30"><path d="M18 6 6 18"/><path d="m6 6 12 12"/></g></svg>
</div></body></html>
